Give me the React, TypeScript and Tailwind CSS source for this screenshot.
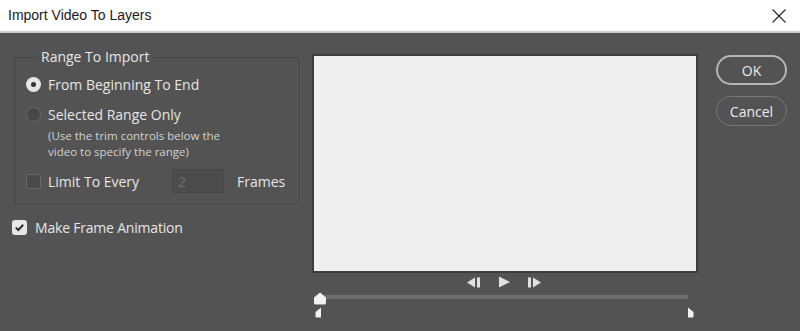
import React, { useState } from 'react';

const font = { fontFamily: '"Open Sans", "Liberation Sans", sans-serif' };

const Radio: React.FC<{ checked: boolean }> = ({ checked }) => (
    <span
        className={`flex items-center justify-center w-[15px] h-[15px] rounded-full ${checked ? 'bg-[#e6e6e6]' : 'bg-[#474747] border border-[#6a6a6a]'}`}
    >
        {checked && <span className="w-[5px] h-[5px] rounded-full bg-[#333]" />}
    </span>
);

const Check: React.FC<{ checked: boolean }> = ({ checked }) => (
    <span
        className={`flex items-center justify-center w-[15px] h-[15px] rounded-[3px] ${checked ? 'bg-[#e6e6e6]' : 'bg-[#4a4a4a] border border-[#6a6a6a]'}`}
    >
        {checked && (
            <svg width="11" height="11" viewBox="0 0 11 11">
                <path d="M1.8 5.6 L4.3 8 L9.2 2.8" fill="none" stroke="#2b2b2b" strokeWidth="2" />
            </svg>
        )}
    </span>
);

const App: React.FC = () => {
    const [range, setRange] = useState<'all' | 'sel'>('all');
    const [animate, setAnimate] = useState(true);

    return (
        <div className="w-[800px] h-[331px] bg-[#535353] flex flex-col overflow-hidden" style={font}>
            {/* title bar */}
            <div className="h-[33px] bg-white flex items-center justify-between pl-[8px] pr-[13px] border-b-2 border-[#cfcfcf]">
                <span className="text-[14px] text-[#1a1a1a]" style={{ fontFamily: '"Liberation Sans", sans-serif' }}>
                    Import Video To Layers
                </span>
                <svg width="16" height="16" viewBox="0 0 16 16">
                    <path d="M1.5 1.5 L14.5 14.5 M14.5 1.5 L1.5 14.5" stroke="#222" strokeWidth="1.1" />
                </svg>
            </div>

            <div className="flex flex-1">
                {/* left options */}
                <div className="w-[312px] pl-[14px] pt-[15px] text-[#e6e6e6]">
                    <fieldset className="w-[286px] h-[157px] border border-[#444] rounded-[2px] shadow-[1px_1px_0_#5c5c5c]">
                        <legend className="ml-[22px] px-[4px] text-[14px] leading-[18px]">Range To Import</legend>
                        <div className="pl-[11px] pt-[8px] flex flex-col">
                            <button onClick={() => setRange('all')} className="flex items-center gap-[7px] h-[20px] text-[14px]">
                                <Radio checked={range === 'all'} />
                                <span>From Beginning To End</span>
                            </button>
                            <button onClick={() => setRange('sel')} className="flex items-center gap-[7px] h-[20px] mt-[10px] text-[14px]">
                                <Radio checked={range === 'sel'} />
                                <span>Selected Range Only</span>
                            </button>
                            <div className="pl-[22px] mt-[4px] text-[11.5px] leading-[16px] text-[#d2d2d2]">
                                <div>(Use the trim controls below the</div>
                                <div>video to specify the range)</div>
                            </div>
                            <div className="flex items-center h-[24px] mt-[9px] text-[14px]">
                                <Check checked={false} />
                                <span className="ml-[7px] w-[124px]">Limit To Every</span>
                                <span className="w-[52px] h-[24px] bg-[#4c4c4c] border border-[#474747] pl-[5px] text-[#6f6f6f] flex items-center">2</span>
                                <span className="ml-[13px]">Frames</span>
                            </div>
                        </div>
                    </fieldset>
                    <button onClick={() => setAnimate(!animate)} className="flex items-center gap-[8px] mt-[12px] -ml-[2px] text-[14px] h-[20px]">
                        <Check checked={animate} />
                        <span className="tracking-[-0.2px]">Make Frame Animation</span>
                    </button>
                </div>

                {/* preview */}
                <div className="w-[386px] pt-[21px] flex flex-col">
                    <div className="h-[219px] border-2 border-[#3d3d3d] bg-[#efefef]" />
                    <div className="flex justify-center items-center gap-[16px] h-[18px] pr-[2px]">
                        <svg width="15" height="11" viewBox="0 0 15 11">
                            <path d="M0 5.5 L8 0.5 L8 10.5 Z" fill="#e0e0e0" />
                            <rect x="10" y="0.5" width="3" height="10" fill="#e0e0e0" />
                        </svg>
                        <svg width="13" height="12" viewBox="0 0 13 12">
                            <path d="M1 0.5 L12 6 L1 11.5 Z" fill="#e0e0e0" />
                        </svg>
                        <svg width="15" height="11" viewBox="0 0 15 11">
                            <rect x="1" y="0.5" width="3" height="10" fill="#e0e0e0" />
                            <path d="M6 0.5 L14 5.5 L6 10.5 Z" fill="#e0e0e0" />
                        </svg>
                    </div>
                    <div className="relative h-[40px]">
                        <div className="absolute left-[8px] right-[10px] top-[4px] h-[4px] bg-[#6e6e6e]" />
                        <svg className="absolute left-[1px] top-[1px]" width="14" height="13" viewBox="0 0 14 13">
                            <path d="M7 0.5 L13 5.5 L13 11 Q13 12.5 11.5 12.5 L2.5 12.5 Q1 12.5 1 11 L1 5.5 Z" fill="#f2f2f2" />
                        </svg>
                        <svg className="absolute left-[3px] top-[16px]" width="7" height="11" viewBox="0 0 7 11">
                            <path d="M6 0.5 L6 10.5 L1.5 10.5 Q0.5 10.5 0.5 9.5 L0.5 5 Z" fill="#f2f2f2" />
                        </svg>
                        <svg className="absolute right-[4px] top-[16px]" width="7" height="11" viewBox="0 0 7 11">
                            <path d="M1 0.5 L1 10.5 L5.5 10.5 Q6.5 10.5 6.5 9.5 L6.5 5 Z" fill="#f2f2f2" />
                        </svg>
                    </div>
                </div>

                {/* buttons */}
                <div className="flex-1 pl-[18px] pt-[22px] flex flex-col gap-[11px]">
                    <button className="w-[71px] h-[30px] rounded-full border-2 border-[#b5b5b5] text-[14px] text-[#ececec]">OK</button>
                    <button className="w-[71px] h-[30px] rounded-full border border-[#777] text-[14px] text-[#ececec]">Cancel</button>
                </div>
            </div>
        </div>
    );
};

export default App;
